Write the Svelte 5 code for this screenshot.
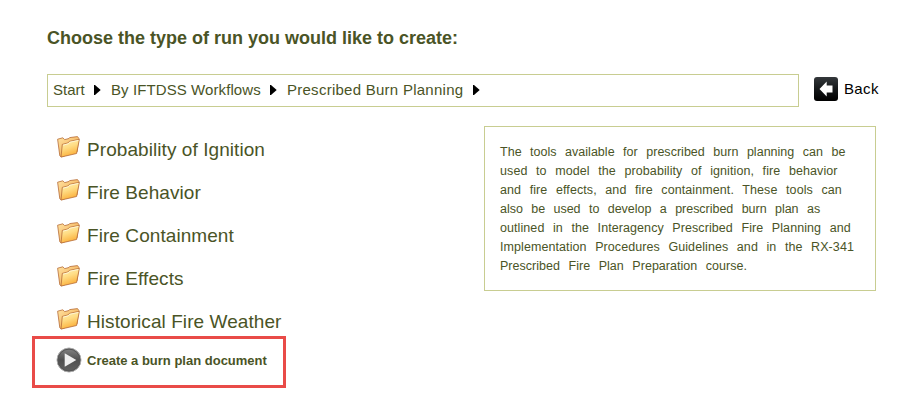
<script>
  const crumbs = [
    { label: 'Start', width: 58, tracking: 0.02 },
    { label: 'By IFTDSS Workflows', width: 176, tracking: 0.09 },
    { label: 'Prescribed Burn Planning', width: 203, tracking: 0.26 }
  ];
  const folders = [
    'Probability of Ignition',
    'Fire Behavior',
    'Fire Containment',
    'Fire Effects',
    'Historical Fire Weather'
  ];
  const description = [
    { text: 'The tools available for prescribed burn planning can be', tracking: 0.02 },
    { text: 'used to model the probability of ignition, fire behavior', tracking: 0.09 },
    { text: 'and fire effects, and fire containment. These tools can', tracking: 0.09 },
    { text: 'also be used to develop a prescribed burn plan as', tracking: -0.03 },
    { text: 'outlined in the Interagency Prescribed Fire Planning and', tracking: 0.08 },
    { text: 'Implementation Procedures Guidelines and in the RX-341', tracking: 0.08 },
    { text: 'Prescribed Fire Plan Preparation course.', tracking: 0.03 }
  ];
</script>

<main>
  <h1>Choose the type of run you would like to create:</h1>

  <div class="top">
    <nav class="crumbs">
      {#each crumbs as crumb}
        <span class="crumb" style="width: {crumb.width}px">
          <span class="label" style="letter-spacing: {crumb.tracking}px">{crumb.label}</span>
          <svg width="7" height="10" viewBox="0 0 7 10"><path d="M0 0H1L6.7 5L1 10H0Z" /></svg>
        </span>
      {/each}
    </nav>
    <div class="back">
      <svg width="24" height="24" viewBox="0 0 24 24">
        <defs>
          <linearGradient id="backFill" x2="0" y2="1">
            <stop offset="0" stop-color="#34383b" />
            <stop offset=".5" stop-color="#15181a" />
            <stop offset="1" stop-color="#000" />
          </linearGradient>
        </defs>
        <rect width="24" height="24" rx="3" fill="url(#backFill)" />
        <path d="M5.5 12L12.7 4.6V8.5H18.5V15.5H12.7V19.4Z" fill="#fff" />
      </svg>
      <span class="label">Back</span>
    </div>
  </div>

  <div class="body">
    <div class="left">
      <ul>
        {#each folders as folder}
          <li>
            <svg width="23" height="22" viewBox="0 0 23 22">
              <defs>
                <linearGradient id="folderBack" x2="1" y2="1">
                  <stop offset="0" stop-color="#ffe3a2" />
                  <stop offset="1" stop-color="#f0a040" />
                </linearGradient>
                <linearGradient id="folderFront" x2=".35" y2="1">
                  <stop offset="0" stop-color="#fff3bd" />
                  <stop offset=".5" stop-color="#ffdd85" />
                  <stop offset="1" stop-color="#fbb03b" />
                </linearGradient>
              </defs>
              <path d="M.6 3.2L5.8 1.8L7.7 3.6L12 2.5L12.6 1.6L20.5 .6L21.8 2.4L20 16L4 20.8L2.8 19.8Z" fill="url(#folderBack)" stroke="#b66c38" stroke-width=".8" stroke-linejoin="round" />
              <path d="M5.3 8.4L10.8 7L12.4 5.4L22.4 3.3L19.6 17.5L4 21.1Z" fill="url(#folderFront)" stroke="#b66c38" stroke-width=".8" stroke-linejoin="round" />
              <path d="M6.1 9.1L11.2 7.8L12.8 6.2L21.4 4.4" fill="none" stroke="#fffbe2" stroke-width=".8" />
            </svg>
            <span>{folder}</span>
          </li>
        {/each}
      </ul>
      <div class="create">
        <svg width="26" height="26" viewBox="0 0 26 26">
          <defs>
            <linearGradient id="playFill" x2="0" y2="1">
              <stop offset="0" stop-color="#858585" />
              <stop offset=".5" stop-color="#505050" />
              <stop offset="1" stop-color="#626262" />
            </linearGradient>
          </defs>
          <circle cx="13" cy="13" r="12" fill="url(#playFill)" stroke="#aaa" stroke-width="1" />
          <circle cx="13" cy="13" r="10.9" fill="none" stroke="#555" stroke-width="1" />
          <path d="M8.7 6.2L20.3 13L8.7 19.8Z" fill="#f0f0f0" />
        </svg>
        <span>Create a burn plan document</span>
      </div>
    </div>
    <p class="info">
      {#each description as line}<span style="letter-spacing: {line.tracking}px">{line.text}</span>{/each}
    </p>
  </div>
</main>

<style>
  :global(body) { background: #fff; }
  main {
    width: 899px;
    height: 403px;
    box-sizing: border-box;
    padding: 26px 0 0 47px;
    overflow: hidden;
    background: #fff;
    color: #4a5426;
    font-family: "Liberation Sans", Arial, sans-serif;
    white-space: nowrap;
  }
  svg { display: block; flex: none; }
  h1 { margin: 0; font-size: 18px; line-height: 24px; height: 48px; }
  .top { display: flex; height: 33px; }
  .label { padding-bottom: 2px; }
  .crumbs {
    display: flex;
    align-items: center;
    box-sizing: border-box;
    width: 752px;
    height: 33px;
    padding: 0 0 1px 5px;
    border: 1px solid #c8cd91;
    font-size: 15px;
  }
  .crumb { display: flex; align-items: center; justify-content: space-between; flex: none; }
  .crumb svg { fill: #000; margin-right: 10px; }
  .back { display: flex; align-items: center; gap: 6px; height: 24px; margin: 3px 0 0 15px; color: #000; font-size: 15px; letter-spacing: .35px; }
  .body { display: flex; margin-top: 19px; }
  .left { width: 437px; flex: none; }
  ul { margin: 0; padding: 1px 0 0 10px; list-style: none; }
  li { display: flex; height: 43px; padding-top: 9px; box-sizing: border-box; gap: 7px; font-size: 19px; line-height: 28px; letter-spacing: .07px; }
  .create {
    display: flex;
    box-sizing: border-box;
    width: 254px;
    height: 52px;
    margin: -6px 0 0 -15px;
    padding: 8px 0 0 21px;
    border: 3px solid #e94b48;
    gap: 5px;
    font-size: 13px;
    font-weight: bold;
    line-height: 28px;
  }
  .info {
    box-sizing: border-box;
    width: 392px;
    height: 165px;
    margin: 0;
    padding: 16px 15px 14px;
    border: 1px solid #c8cd91;
    font-size: 12.5px;
    line-height: 19px;
    word-spacing: 5px;
  }
  .info span { display: block; }
</style>
